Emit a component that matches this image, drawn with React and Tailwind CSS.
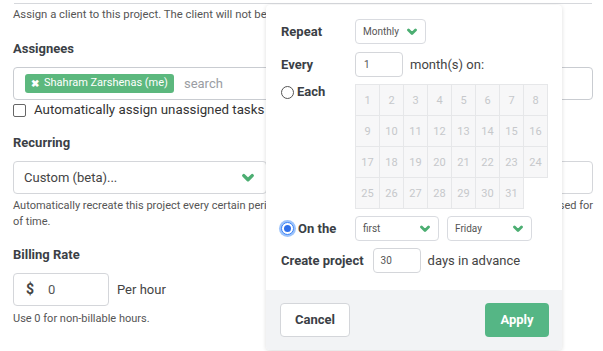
import React from 'react';

const Chevron = ({ size = 9 }) => (
  <svg width={size} height={size} viewBox="0 0 10 10" className="shrink-0">
    <polyline points="1.5,3 5,6.5 8.5,3" fill="none" stroke="#4cae72" strokeWidth="2.8" strokeLinecap="round" strokeLinejoin="round" />
  </svg>
);

const MiniSelect = ({ value, width }) => (
  <div className={`flex items-center justify-between h-[25px] border border-[#d9dbe0] rounded-[4px] bg-white pl-[7px] pr-[8px] text-[10px] text-[#555] ${width}`}>
    <span>{value}</span>
    <Chevron size={10} />
  </div>
);

const Radio = ({ checked }) => (
  checked ? (
    <span className="w-[13px] h-[13px] rounded-full border border-[#3b82f6] ring-2 ring-[#9cc3fb] flex items-center justify-center bg-white">
      <span className="w-[7px] h-[7px] rounded-full bg-[#2f6fe8]" />
    </span>
  ) : (
    <span className="w-[13px] h-[13px] rounded-full border border-[#555] bg-white" />
  )
);

const days = Array.from({ length: 31 }, (_, i) => i + 1);

export default function App() {
  return (
    <div className="relative w-[603px] h-[351px] overflow-hidden bg-white text-[#3b3f46]" style={{ fontFamily: 'Roboto, "Liberation Sans", sans-serif' }}>
      {/* Background form */}
      <div className="pl-[13px] pr-[10px]">
        <div className="mt-[3px] ml-[1px] w-[578px] h-px bg-[#d6d8dc]" />
        <p className="mt-[3px] text-[11.3px] leading-[16px] text-[#555] whitespace-nowrap">
          Assign a client to this project. The client will not be notified of the change.
        </p>

        <h3 className="mt-[17px] text-[13px] leading-[18px] font-bold text-[#3b3f46]">Assignees</h3>
        <div className="mt-[9px] h-[33px] w-[580px] border border-[#c9ccd1] rounded-[4px] flex items-center pl-[11px] gap-[10px]">
          <span className="h-[19px] px-[6px] rounded-[3px] bg-[#5cb87e] text-white text-[11px] flex items-center gap-[5px]">
            <span className="text-[10px] font-bold">✖</span>
            Shahram Zarshenas (me)
          </span>
          <span className="text-[13px] text-[#9a9da3]">search</span>
        </div>
        <label className="mt-[2px] flex items-center gap-[8px] h-[16px]">
          <span className="w-[13px] h-[13px] border border-[#666] rounded-[2px] bg-white" />
          <span className="text-[13.3px] text-[#333] whitespace-nowrap">Automatically assign unassigned tasks to assignees of this project</span>
        </label>

        <h3 className="mt-[16px] text-[13px] leading-[18px] font-bold text-[#3b3f46]">Recurring</h3>
        <div className="mt-[9px] flex gap-[8px]">
          <div className="h-[33px] w-[254px] border border-[#d4d6da] rounded-[4px] flex items-center justify-between pl-[10px] pr-[12px]">
            <span className="text-[13px] text-[#444]">Custom (beta)...</span>
            <Chevron size={12} />
          </div>
          <div className="h-[33px] w-[318px] border border-[#d4d6da] rounded-[4px]" />
        </div>
        <p className="mt-[4px] text-[11px] leading-[16px] text-[#555] w-[580px] flex justify-between whitespace-nowrap">
          <span>Automatically recreate this project every certain period</span>
          <span>will be used for</span>
        </p>
        <p className="text-[11px] leading-[16px] text-[#555]">of time.</p>

        <h3 className="mt-[16px] text-[13px] leading-[18px] font-bold text-[#3b3f46]">Billing Rate</h3>
        <div className="mt-[9px] flex items-center gap-[8px]">
          <div className="h-[33px] w-[96px] border border-[#d4d6da] rounded-[4px] flex items-center pl-[12px] gap-[14px]">
            <span className="text-[14px] font-bold text-[#444]">$</span>
            <span className="text-[13px] text-[#555]">0</span>
          </div>
          <span className="text-[13px] text-[#444]">Per hour</span>
        </div>
        <p className="mt-[5px] text-[11px] leading-[16px] text-[#555]">Use 0 for non-billable hours.</p>
      </div>

      {/* Recurrence popover */}
      <div className="absolute left-[266px] top-[5px] w-[296px] h-[345px] bg-white rounded-[4px] shadow-[0_1px_4px_rgba(0,0,0,0.14)] flex flex-col overflow-hidden">
        <div className="flex-1 pl-[15px] pt-[14px]">
          <div className="flex items-center h-[25px]">
            <span className="w-[74px] text-[13px] font-bold">Repeat</span>
            <MiniSelect value="Monthly" width="w-[71px]" />
          </div>
          <div className="mt-[8px] flex items-center h-[25px]">
            <span className="w-[74px] text-[13px] font-bold">Every</span>
            <div className="h-[25px] w-[48px] border border-[#d4d6da] rounded-[4px] flex items-center pl-[8px] text-[10px] text-[#555]">1</div>
            <span className="ml-[7px] text-[13px] text-[#444]">month(s) on:</span>
          </div>
          <div className="mt-[7px] flex">
            <div className="w-[74px] flex items-center gap-[3px] h-[16px]">
              <Radio />
              <span className="text-[13px] font-bold">Each</span>
            </div>
            <div className="grid grid-cols-[repeat(8,24px)] border-t border-l border-[#e6e7e9]">
              {days.map((d) => (
                <div key={d} className="h-[31px] flex items-center justify-center bg-[#f7f7f8] border-r border-b border-[#e6e7e9] text-[11px] leading-none text-[#c6c8cb]">
                  {d}
                </div>
              ))}
            </div>
          </div>
          <div className="mt-[7px] flex items-center h-[25px]">
            <div className="w-[74px] flex items-center gap-[4px]">
              <Radio checked />
              <span className="text-[13px] font-bold">On the</span>
            </div>
            <MiniSelect value="first" width="w-[84px]" />
            <div className="w-[8px]" />
            <MiniSelect value="Friday" width="w-[85px]" />
          </div>
          <div className="mt-[7px] flex items-center h-[25px]">
            <span className="text-[13px] font-bold">Create project</span>
            <div className="ml-[9px] h-[25px] w-[48px] border border-[#d4d6da] rounded-[4px] flex items-center pl-[7px] text-[10px] text-[#555]">30</div>
            <span className="ml-[7px] text-[13px] text-[#444]">days in advance</span>
          </div>
        </div>
        <div className="h-[60px] bg-[#f2f3f5] flex items-center justify-between pl-[14px] pr-[13px]">
          <button className="h-[34px] w-[70px] bg-white border border-[#d4d6da] rounded-[4px] text-[13px] font-bold text-[#3b3f46]">Cancel</button>
          <button className="h-[34px] w-[64px] bg-[#55b685] rounded-[4px] text-[13px] font-bold text-white">Apply</button>
        </div>
      </div>
    </div>
  );
}
